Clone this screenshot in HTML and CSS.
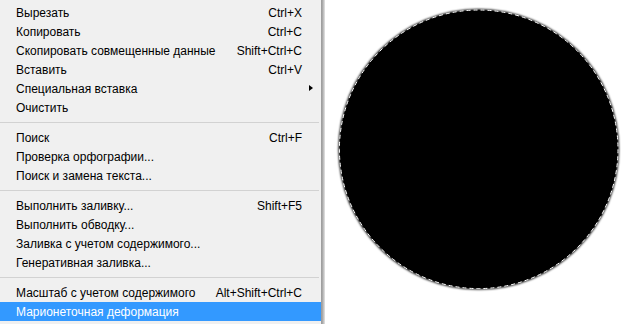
FILE: index.html
```html
<!DOCTYPE html>
<html lang="ru">
<head>
    <meta charset="UTF-8">
    <title>Редактирование</title>
    <link rel="stylesheet" href="styles.css">
</head>
<body>
    <div class="menu">
        <div class="item"><span>Вырезать</span><span class="key">Ctrl+X</span></div>
        <div class="item"><span>Копировать</span><span class="key">Ctrl+C</span></div>
        <div class="item"><span>Скопировать совмещенные данные</span><span class="key">Shift+Ctrl+C</span></div>
        <div class="item"><span>Вставить</span><span class="key">Ctrl+V</span></div>
        <div class="item sub"><span>Специальная вставка</span></div>
        <div class="item"><span>Очистить</span></div>
        <div class="sep"></div>
        <div class="item"><span>Поиск</span><span class="key">Ctrl+F</span></div>
        <div class="item"><span>Проверка орфографии...</span></div>
        <div class="item"><span>Поиск и замена текста...</span></div>
        <div class="sep"></div>
        <div class="item"><span>Выполнить заливку...</span><span class="key">Shift+F5</span></div>
        <div class="item"><span>Выполнить обводку...</span></div>
        <div class="item"><span>Заливка с учетом содержимого...</span></div>
        <div class="item"><span>Генеративная заливка...</span></div>
        <div class="sep"></div>
        <div class="item"><span>Масштаб с учетом содержимого</span><span class="key">Alt+Shift+Ctrl+C</span></div>
        <div class="item active"><span>Марионеточная деформация</span></div>
    </div>
    <div class="edge"></div>
    <div class="canvas">
        <svg width="304" height="324" viewBox="0 0 304 324">
            <defs>
                <filter id="soft" x="-10%" y="-10%" width="120%" height="120%">
                    <feGaussianBlur stdDeviation="0.9"/>
                </filter>
            </defs>
            <circle cx="153.7" cy="149.3" r="140.3" fill="#000" filter="url(#soft)"/>
            <circle cx="153.7" cy="149.3" r="139" fill="#000"/>
            <circle cx="153.7" cy="149.3" r="139.3" fill="none" stroke="#fff" stroke-width="1" stroke-dasharray="4 3"/>
        </svg>
    </div>
</body>
</html>
```

FILE: styles.css
```css
body {
    margin: 0;
    display: flex;
    height: 324px;
    overflow: hidden;
    background: #fff;
    font-family: "Liberation Sans", Arial, sans-serif;
    font-size: 12px;
    color: #000;
}
.menu {
    width: 321px;
    background: #f0f0f0;
    padding-top: 3px;
    box-sizing: border-box;
}
.item {
    display: flex;
    justify-content: space-between;
    height: 19px;
    line-height: 20px;
    padding: 0 19px 0 16px;
    position: relative;
}
.item.active {
    background: #3399ff;
    color: #fff;
}
.sub::after {
    content: "";
    position: absolute;
    right: 8px;
    top: 6px;
    border-left: 4px solid #000;
    border-top: 3.5px solid transparent;
    border-bottom: 3.5px solid transparent;
}
.sep {
    height: 1px;
    margin: 5px 2px 5px 0;
    background: #d2d2d2;
}
.edge {
    width: 4px;
    background: linear-gradient(to right, #9a9a9a, #a6a6a6, #c4c4c4, #e6e6e6);
}
.canvas {
    flex: 1;
    background: #fff;
}
.canvas svg {
    display: block;
}
```
